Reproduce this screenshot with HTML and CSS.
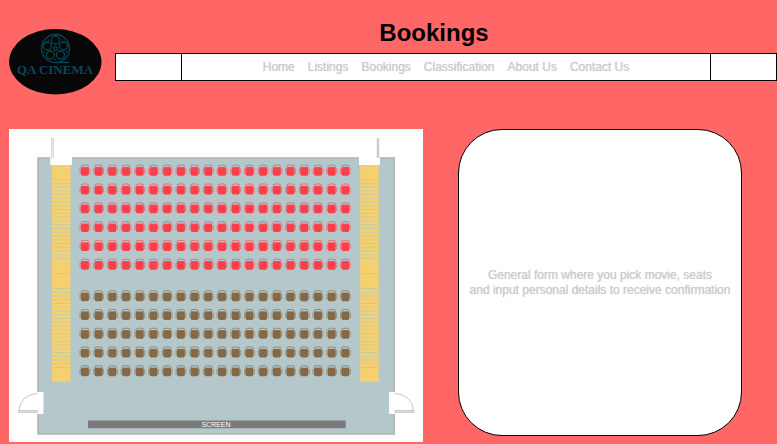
FILE: index.html
```html
<!DOCTYPE html>
<html lang="en">
<head>
<meta charset="utf-8">
<title>Bookings - QA Cinema</title>
<link rel="stylesheet" href="styles.css">
</head>
<body>
<header class="header">
  <svg class="logo" viewBox="0 0 94 68" role="img" aria-label="QA Cinema">
    <ellipse cx="46.300" cy="33.800" rx="46.200" ry="32.800" fill="#070707"/>
    <g fill="none" stroke="#06485a" stroke-width="1.300">
      <circle cx="46.500" cy="20.500" r="14"/>
      <circle cx="46.500" cy="12" r="4"/>
      <circle cx="54.500" cy="18" r="4"/>
      <circle cx="51.500" cy="27" r="4"/>
      <circle cx="41.500" cy="27" r="4"/>
      <circle cx="38.500" cy="18" r="4"/>
      <circle cx="46.500" cy="20.500" r="1.800"/>
      <path d="M46.500 34.500H60"/>
    </g>
    <g fill="#06485a">
      <circle cx="39.500" cy="12" r="0.800"/><circle cx="53.500" cy="12" r="0.800"/>
      <circle cx="35.500" cy="24" r="0.800"/><circle cx="57.500" cy="24" r="0.800"/>
      <circle cx="46.500" cy="31.500" r="0.800"/>
    </g>
    <text class="logo-name" x="46" y="46" text-anchor="middle">QA CINEMA</text>
  </svg>
  <div class="masthead">
    <h1 class="title">Bookings</h1>
    <div class="bar">
      <div class="bar-end"></div>
      <nav class="nav">
        <a href="#home">Home</a>
        <a href="#listings">Listings</a>
        <a href="#bookings">Bookings</a>
        <a href="#classification">Classification</a>
        <a href="#about">About Us</a>
        <a href="#contact">Contact Us</a>
      </nav>
      <div class="bar-end"></div>
    </div>
  </div>
</header>
<main class="content">
  <svg class="seating" viewBox="9 129 414 313.400" role="img" aria-label="Seating plan">
    <defs>
      <g id="seat">
        <path d="M1.500 2.600Q1.500 .5 3.500 .5H7.500Q9.500 .5 9.500 2.600" fill="none" stroke="currentColor" stroke-width="1" opacity=".65"/>
        <path d="M.7 3.500V9M10.300 3.500V9" stroke="currentColor" stroke-width="1.200" opacity=".5"/>
        <path d="M2.200 2.300H8.800L9.500 4V9Q9.500 11 7.800 11H3.200Q1.500 11 1.500 9V4Z" fill="currentColor"/>
        <path d="M2 2H9" stroke="#b4c8cb" stroke-width=".7" opacity=".6"/>
      </g>
      <g id="four">
        <use href="#seat"/><use href="#seat" x="13.710"/><use href="#seat" x="27.420"/><use href="#seat" x="41.130"/>
      </g>
      <g id="row">
        <use href="#four"/><use href="#four" x="54.840"/><use href="#four" x="109.680"/><use href="#four" x="164.520"/><use href="#four" x="219.360"/>
      </g>
      <g id="stairs">
        <path d="M52 165H70.500V381.800H52Z" fill="#f4d06f"/>
        <path d="M61.250 179V259.200M61.250 288V368" stroke="#c9cba5" stroke-width="18.500" stroke-dasharray="1 2.760"/>
        <path d="M52 273.500H70.500" stroke="#c9cba5"/>
      </g>
      <g id="door">
        <path d="M37 392H43.500V414H37Z" fill="#fff"/>
        <path d="M37.500 393.500Q20 395 19 411" fill="none" stroke="#c8c8c8"/>
        <path d="M18.500 410.500H37.500V412.500H18.500Z" fill="#ddd" stroke="#bbb" stroke-width=".7"/>
      </g>
    </defs>
    <path d="M9 129H423V443H9Z" fill="#fff"/>
    <path d="M38 158H394.200V434H38Z" fill="#b4c8cb" stroke="#b1b1b1" stroke-width="1.500"/>
    <path d="M50.300 156H72V165H50.300ZM359 156H380V165H359Z" fill="#fff"/>
    <path d="M51.500 138.500H53.500V157.500H51.500Z" fill="#eee" stroke="#c8c8c8" stroke-width=".7"/>
    <path d="M377 138.500H379V157.500H377Z" fill="#ccc" stroke="#c8c8c8" stroke-width=".5"/>
    <use href="#stairs"/>
    <use href="#stairs" x="308.200"/>
    <use href="#door"/>
    <use href="#door" transform="translate(432.500 0) scale(-1 1)"/>
    <g color="#fb404c">
      <use href="#row" x="79.400" y="164.700"/><use href="#row" x="79.400" y="183.500"/><use href="#row" x="79.400" y="202.300"/>
      <use href="#row" x="79.400" y="221.100"/><use href="#row" x="79.400" y="239.900"/><use href="#row" x="79.400" y="258.700"/>
    </g>
    <g color="#856946">
      <use href="#row" x="79.400" y="290.200"/><use href="#row" x="79.400" y="309"/><use href="#row" x="79.400" y="327.800"/>
      <use href="#row" x="79.400" y="346.500"/><use href="#row" x="79.400" y="365.200"/>
    </g>
    <path d="M88 420.400H345.700V428.200H88Z" fill="#7b7b7b"/>
    <text class="screen-label" x="216" y="427" text-anchor="middle">SCREEN</text>
  </svg>
  <section class="panel">
    <p>General form where you pick movie, seats<br>and input personal details to receive confirmation</p>
  </section>
</main>
</body>
</html>
```
FILE: styles.css
```css
* {
  box-sizing: border-box;
}

body {
  margin: 0;
  background: #ff6666;
  font: 12px/15px "Liberation Sans", Arial, sans-serif;
  color: #cccccc;
}

.header {
  display: flex;
  align-items: flex-start;
  gap: 12px;
  padding: 19px 0 0 9px;
}

.logo {
  flex: none;
  width: 94px;
  height: 68px;
  margin-top: 9px;
}

.logo-name {
  font: bold 13px "Liberation Serif", serif;
  fill: #06485a;
}

.masthead {
  flex: 1;
}

.title {
  margin: 0 0 6px;
  padding-right: 24px;
  color: #000000;
  font-size: 24px;
  line-height: 28px;
  text-align: center;
}

.bar {
  display: flex;
  height: 28px;
  background: #ffffff;
  border: 1px solid #000000;
}

.bar-end {
  width: 65px;
}

.nav {
  flex: 1;
  display: flex;
  align-items: center;
  justify-content: center;
  gap: 13px;
  border: solid #000000;
  border-width: 0 1px;
}

.nav a,
.panel p {
  text-shadow: 0 0 1px #cccccc;
}

.nav a {
  color: inherit;
  text-decoration: none;
  white-space: nowrap;
}

.content {
  display: grid;
  grid-template-columns: 414fr 284fr;
  align-items: start;
  gap: 35px;
  padding: 33px 35px 0 9px;
}

.seating {
  display: block;
  width: 100%;
}

.screen-label {
  font-size: 7px;
  fill: #ffffff;
}

.panel {
  display: flex;
  align-items: center;
  justify-content: center;
  min-height: 307px;
  background: #ffffff;
  border: 1px solid #000000;
  border-radius: 44px;
  text-align: center;
}

.panel p {
  margin: 0;
}
```
